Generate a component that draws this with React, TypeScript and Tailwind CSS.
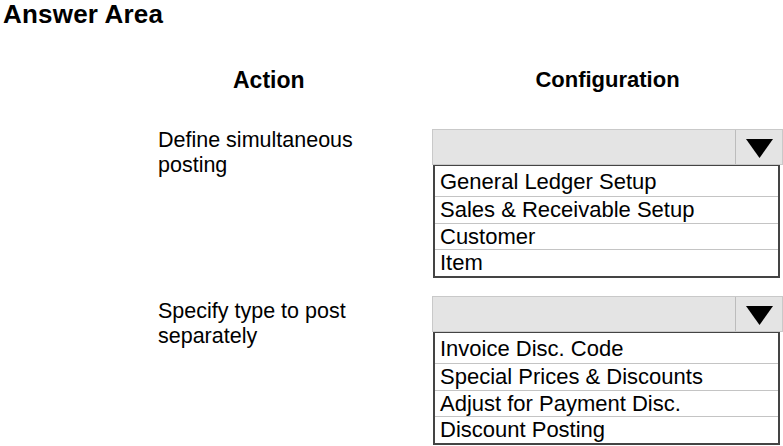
const FONT = "font-['Liberation_Sans',Arial,sans-serif]";

const QUESTIONS: { action: string[]; options: string[]; textOffset: string }[] = [
  {
    action: ["Define simultaneous", "posting"],
    options: ["General Ledger Setup", "Sales & Receivable Setup", "Customer", "Item"],
    textOffset: "-mt-[1px]",
  },
  {
    action: ["Specify type to post", "separately"],
    options: ["Invoice Disc. Code", "Special Prices & Discounts", "Adjust for Payment Disc.", "Discount Posting"],
    textOffset: "pt-[3px]",
  },
];

function Dropdown({ options }: { options: string[] }) {
  return (
    <div className="w-[351px]">
      <div className="flex h-[36px] border border-[#c9c9c9] bg-[#e4e4e4]">
        <div className="flex-1" />
        <div className="flex w-[47px] items-center justify-center border-l border-[#bcbcbc]">
          <svg width="27" height="19" viewBox="0 0 27 19" className="mt-[2px]">
            <polygon points="0,0 27,0 13.5,19" fill="#000" />
          </svg>
        </div>
      </div>
      <div className="ml-[1px] w-[347px] border-x-2 border-b-2 border-t border-[#444]">
        {options.map((o, i) => (
          <div
            key={o}
            className={`flex items-center pl-[5px] text-[22px] leading-none text-black ${
              i > 0 ? "h-[26.7px] border-t border-[#c4c4c4]" : "h-[30px] pt-[1px]"
            }`}
          >
            {o}
          </div>
        ))}
      </div>
    </div>
  );
}

export default function App() {
  return (
    <div className={`h-[446px] w-[783px] overflow-hidden bg-white text-black ${FONT}`}>
      <h1 className="pl-[3px] text-[26px] font-bold leading-[28px] tracking-[0.2px]">Answer Area</h1>

      <div className="mt-[39px] flex">
        <div className="w-[432px] pl-[233px] text-[23px] font-bold leading-[26px]">Action</div>
        <div className="w-[351px] text-center text-[22px] font-bold leading-[26px]">Configuration</div>
      </div>

      <div className="mt-[36px] flex flex-col gap-[18px]">
        {QUESTIONS.map((q) => (
          <div key={q.action[0]} className="flex">
            <div className={`w-[432px] pl-[158px] text-[21.5px] leading-[25px] ${q.textOffset}`}>
              {q.action.map((l) => (
                <div key={l}>{l}</div>
              ))}
            </div>
            <Dropdown options={q.options} />
          </div>
        ))}
      </div>
    </div>
  );
}
